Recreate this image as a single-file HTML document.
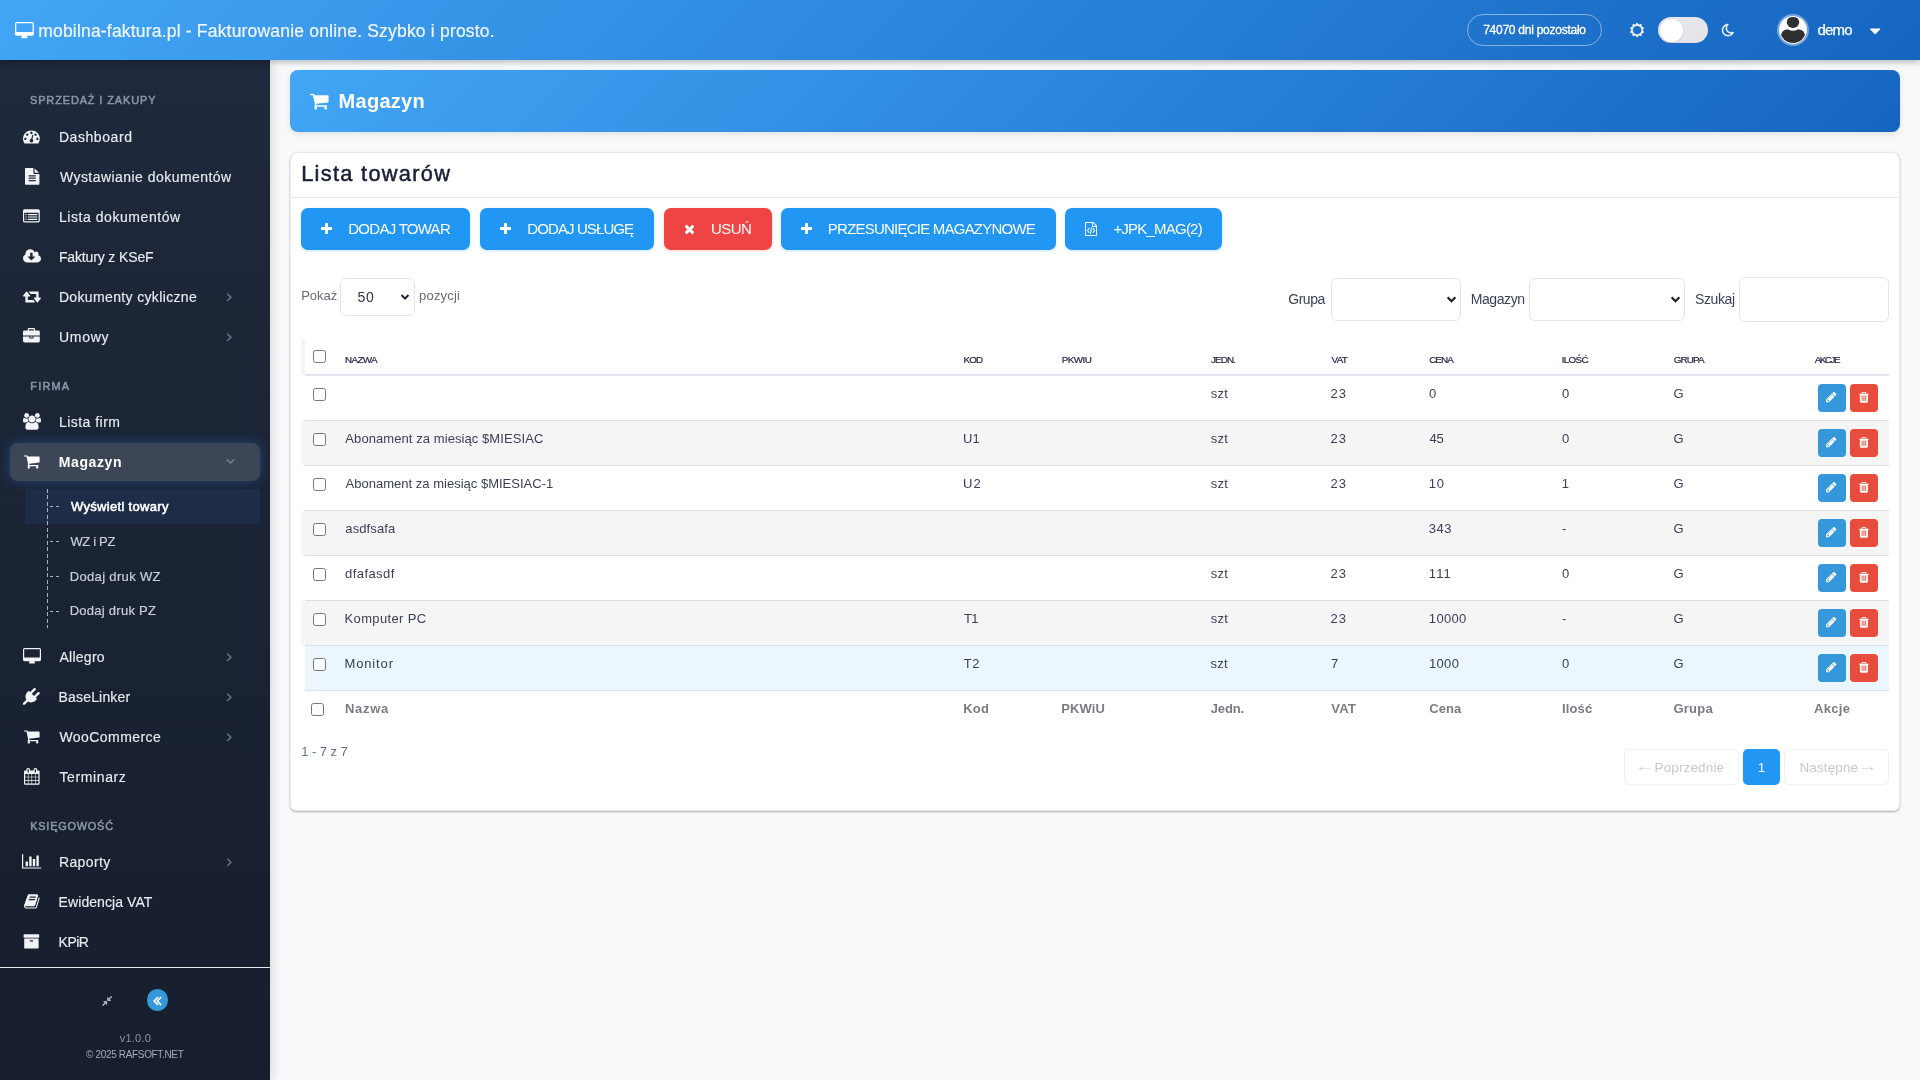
<!DOCTYPE html>
<html lang="pl"><head><meta charset="utf-8"><title>mobilna-faktura.pl - Magazyn</title>
<style>
*{box-sizing:border-box;margin:0;padding:0}
html,body{width:1920px;height:1080px;overflow:hidden}
body{background:#f8f9fb;font-family:"Liberation Sans",sans-serif;position:relative}
.t{position:absolute;white-space:nowrap;line-height:1;display:block}
.ic{position:absolute;display:block;overflow:visible}
.abs{position:absolute}
#topbar{position:absolute;left:0;top:0;width:1920px;height:60px;background:linear-gradient(135deg,#42a5f5 0%,#1565c0 100%);box-shadow:0 2px 6px rgba(0,0,0,.28);z-index:5}
#side{position:absolute;left:0;top:60px;width:270px;height:1020px;background:linear-gradient(180deg,#1e293b 0%,#171e2d 100%);box-shadow:3px 0 10px rgba(0,0,0,.12);z-index:4}
#banner{position:absolute;left:290px;top:70px;width:1610px;height:61.5px;border-radius:8px;background:linear-gradient(135deg,#42a5f5 0%,#1565c0 100%);box-shadow:0 2px 6px rgba(0,0,0,.10)}
#card{position:absolute;left:290px;top:152px;width:1610px;height:658.5px;border-radius:8px 8px 6px 6px;background:#fff;border:1px solid #e6e8ee;box-shadow:0 1px 2px rgba(0,0,0,.3)}
.btn{position:absolute;top:208px;height:42px;border-radius:7px;background:#2196f3;box-shadow:0 1px 3px rgba(33,150,243,.25)}
.btn.red{background:#ef4444;box-shadow:0 1px 3px rgba(239,68,68,.25)}
.sel{position:absolute;background:#fff;border:1px solid #e3e5ea;border-radius:6px}
.cb{position:absolute;width:13px;height:13px;border:1px solid #767676;border-radius:2.5px;background:#fff}
.row{position:absolute;left:301px;width:1588px;height:44px}
.hl{position:absolute;left:305px;width:1584px;height:1px;background:#dee0e4}
.ab{position:absolute;width:28px;height:28px;border-radius:4px}
</style></head><body><div id="wrap" style="position:absolute;left:0;top:0;width:1920px;height:1080px;will-change:transform">

<div id="topbar">
<svg class="ic" style="left:14.57px;top:21.70px;width:18.86px;height:17.60px;" viewBox="0 -1536 1920 1792"><path fill="#fff" transform="scale(1,-1)" d="M1792 544v832q0 13 -9.5 22.5t-22.5 9.5h-1600q-13 0 -22.5 -9.5t-9.5 -22.5v-832q0 -13 9.5 -22.5t22.5 -9.5h1600q13 0 22.5 9.5t9.5 22.5zM1920 1376v-1088q0 -66 -47 -113t-113 -47h-544q0 -37 16 -77.5t32 -71t16 -43.5q0 -26 -19 -45t-45 -19h-512q-26 0 -45 19 t-19 45q0 14 16 44t32 70t16 78h-544q-66 0 -113 47t-47 113v1088q0 66 47 113t113 47h1600q66 0 113 -47t47 -113z"/></svg>
<span class="t" id="brand" style="left:38.20px;top:22.79px;font-size:17.5px;font-weight:400;color:#f1f7fe;letter-spacing:0.192px;-webkit-text-stroke:0.2px #f1f7fe;">mobilna-faktura.pl - Fakturowanie online. Szybko i prosto.</span>
<div class="abs" style="left:1467px;top:14px;width:135px;height:32px;border-radius:16px;border:1px solid rgba(255,255,255,.45)"></div>
<span class="t" id="days" style="left:1483.15px;top:24.04px;font-size:12px;font-weight:400;color:#fff;letter-spacing:-0.252px;-webkit-text-stroke:0.3px #fff;">74070 dni pozostało</span>
<svg class="ic" style="left:1630.00px;top:23.10px;width:14.20px;height:14.20px;stroke:#fff;stroke-width:70" viewBox="0 -1536 1792 1792"><path fill="#fff" transform="scale(1,-1)" d="M1472 640q0 117 -45.5 223.5t-123 184t-184 123t-223.5 45.5t-223.5 -45.5t-184 -123t-123 -184t-45.5 -223.5t45.5 -223.5t123 -184t184 -123t223.5 -45.5t223.5 45.5t184 123t123 184t45.5 223.5zM1748 363q-4 -15 -20 -20l-292 -96v-306q0 -16 -13 -26q-15 -10 -29 -4 l-292 94l-180 -248q-10 -13 -26 -13t-26 13l-180 248l-292 -94q-14 -6 -29 4q-13 10 -13 26v306l-292 96q-16 5 -20 20q-5 17 4 29l180 248l-180 248q-9 13 -4 29q4 15 20 20l292 96v306q0 16 13 26q15 10 29 4l292 -94l180 248q9 12 26 12t26 -12l180 -248l292 94 q14 6 29 -4q13 -10 13 -26v-306l292 -96q16 -5 20 -20q5 -16 -4 -29l-180 -248l180 -248q9 -12 4 -29z"/></svg>
<div class="abs" style="left:1658px;top:17px;width:50px;height:26px;border-radius:13px;background:#e4e4e9"></div>
<div class="abs" style="left:1659.5px;top:18.5px;width:23px;height:23px;border-radius:50%;background:#fff;box-shadow:0 1px 2px rgba(0,0,0,.12)"></div>
<svg class="ic" style="left:1721.51px;top:23.10px;width:12.17px;height:14.20px;stroke:#fff;stroke-width:50" viewBox="0 -1536 1536 1792"><path fill="#fff" transform="scale(1,-1)" d="M1262 233q-54 -9 -110 -9q-182 0 -337 90t-245 245t-90 337q0 192 104 357q-201 -60 -328.5 -229t-127.5 -384q0 -130 51 -248.5t136.5 -204t204 -136.5t248.5 -51q144 0 273.5 61.5t220.5 171.5zM1465 318q-94 -203 -283.5 -324.5t-413.5 -121.5q-156 0 -298 61 t-245 164t-164 245t-61 298q0 153 57.5 292.5t156 241.5t235.5 164.5t290 68.5q44 2 61 -39q18 -41 -15 -72q-86 -78 -131.5 -181.5t-45.5 -218.5q0 -148 73 -273t198 -198t273 -73q118 0 228 51q41 18 72 -13q14 -14 17.5 -34t-4.5 -38z"/></svg>
<div class="abs" style="left:1777px;top:14px;width:32px;height:32px;border-radius:50%;border:2px solid rgba(255,255,255,.4);background-clip:padding-box"></div>
<div class="abs" style="left:1778.8px;top:15.8px;width:28.4px;height:28.4px;border-radius:50%;background:#fff"></div>
<div class="abs" style="left:1779.6px;top:16.6px;width:26.8px;height:26.8px;border-radius:50%;overflow:hidden"><svg style="position:absolute;left:-3.6px;top:-3.6px;width:34px;height:34px" viewBox="0 0 34 34"><g fill="#303030"><ellipse cx="17" cy="9.2" rx="6.2" ry="5.8"/><path d="M4.8 34 V24.5 Q4.8 16.6 11.8 16.2 Q17 19.4 22.2 16.2 Q29.2 16.6 29.2 24.5 V34 Z"/></g></svg></div>
<span class="t" id="demo" style="left:1817.47px;top:21.90px;font-size:15px;font-weight:400;color:#fff;letter-spacing:-0.794px;-webkit-text-stroke:0.25px #fff;">demo</span>
<svg class="ic" style="left:1870.06px;top:21.60px;width:10.29px;height:18.00px;" viewBox="0 -1536 1024 1792"><path fill="#fff" transform="scale(1,-1)" d="M1024 832q0 -26 -19 -45l-448 -448q-19 -19 -45 -19t-45 19l-448 448q-19 19 -19 45t19 45t45 19h896q26 0 45 -19t19 -45z"/></svg>
</div>
<div id="side">
<span class="t" id="h1" style="left:30.01px;top:35.37px;font-size:10.9px;font-weight:400;color:#8d96a8;letter-spacing:0.917px;-webkit-text-stroke:0.5px #8d96a8;">SPRZEDAŻ I ZAKUPY</span>
<svg class="ic" style="left:23.30px;top:68.00px;width:16.80px;height:16.80px;" viewBox="0 -1536 1792 1792"><path fill="#f1f3f6" transform="scale(1,-1)" d="M384 384q0 53 -37.5 90.5t-90.5 37.5t-90.5 -37.5t-37.5 -90.5t37.5 -90.5t90.5 -37.5t90.5 37.5t37.5 90.5zM576 832q0 53 -37.5 90.5t-90.5 37.5t-90.5 -37.5t-37.5 -90.5t37.5 -90.5t90.5 -37.5t90.5 37.5t37.5 90.5zM1004 351l101 382q6 26 -7.5 48.5t-38.5 29.5 t-48 -6.5t-30 -39.5l-101 -382q-60 -5 -107 -43.5t-63 -98.5q-20 -77 20 -146t117 -89t146 20t89 117q16 60 -6 117t-72 91zM1664 384q0 53 -37.5 90.5t-90.5 37.5t-90.5 -37.5t-37.5 -90.5t37.5 -90.5t90.5 -37.5t90.5 37.5t37.5 90.5zM1024 1024q0 53 -37.5 90.5 t-90.5 37.5t-90.5 -37.5t-37.5 -90.5t37.5 -90.5t90.5 -37.5t90.5 37.5t37.5 90.5zM1472 832q0 53 -37.5 90.5t-90.5 37.5t-90.5 -37.5t-37.5 -90.5t37.5 -90.5t90.5 -37.5t90.5 37.5t37.5 90.5zM1792 384q0 -261 -141 -483q-19 -29 -54 -29h-1402q-35 0 -54 29 q-141 221 -141 483q0 182 71 348t191 286t286 191t348 71t348 -71t286 -191t191 -286t71 -348z"/></svg>
<span class="t" id="m1" style="left:58.89px;top:69.85px;font-size:14px;font-weight:400;color:#e9ebef;letter-spacing:0.579px;-webkit-text-stroke:0.15px #e9ebef;">Dashboard</span>
<svg class="ic" style="left:24.50px;top:108.00px;width:14.40px;height:16.80px;" viewBox="0 -1536 1536 1792"><path fill="#f1f3f6" transform="scale(1,-1)" d="M1468 1060q14 -14 28 -36h-472v472q22 -14 36 -28zM992 896h544v-1056q0 -40 -28 -68t-68 -28h-1344q-40 0 -68 28t-28 68v1600q0 40 28 68t68 28h800v-544q0 -40 28 -68t68 -28zM1152 160v64q0 14 -9 23t-23 9h-704q-14 0 -23 -9t-9 -23v-64q0 -14 9 -23t23 -9h704 q14 0 23 9t9 23zM1152 416v64q0 14 -9 23t-23 9h-704q-14 0 -23 -9t-9 -23v-64q0 -14 9 -23t23 -9h704q14 0 23 9t9 23zM1152 672v64q0 14 -9 23t-23 9h-704q-14 0 -23 -9t-9 -23v-64q0 -14 9 -23t23 -9h704q14 0 23 9t9 23z"/></svg>
<span class="t" id="m2" style="left:59.88px;top:109.85px;font-size:14px;font-weight:400;color:#e9ebef;letter-spacing:0.456px;-webkit-text-stroke:0.15px #e9ebef;">Wystawianie dokumentów</span>
<svg class="ic" style="left:23.30px;top:148.00px;width:16.80px;height:16.80px;" viewBox="0 -1536 1792 1792"><path fill="#f1f3f6" transform="scale(1,-1)" d="M384 352v-64q0 -13 -9.5 -22.5t-22.5 -9.5h-64q-13 0 -22.5 9.5t-9.5 22.5v64q0 13 9.5 22.5t22.5 9.5h64q13 0 22.5 -9.5t9.5 -22.5zM384 608v-64q0 -13 -9.5 -22.5t-22.5 -9.5h-64q-13 0 -22.5 9.5t-9.5 22.5v64q0 13 9.5 22.5t22.5 9.5h64q13 0 22.5 -9.5t9.5 -22.5z M384 864v-64q0 -13 -9.5 -22.5t-22.5 -9.5h-64q-13 0 -22.5 9.5t-9.5 22.5v64q0 13 9.5 22.5t22.5 9.5h64q13 0 22.5 -9.5t9.5 -22.5zM1536 352v-64q0 -13 -9.5 -22.5t-22.5 -9.5h-960q-13 0 -22.5 9.5t-9.5 22.5v64q0 13 9.5 22.5t22.5 9.5h960q13 0 22.5 -9.5t9.5 -22.5z M1536 608v-64q0 -13 -9.5 -22.5t-22.5 -9.5h-960q-13 0 -22.5 9.5t-9.5 22.5v64q0 13 9.5 22.5t22.5 9.5h960q13 0 22.5 -9.5t9.5 -22.5zM1536 864v-64q0 -13 -9.5 -22.5t-22.5 -9.5h-960q-13 0 -22.5 9.5t-9.5 22.5v64q0 13 9.5 22.5t22.5 9.5h960q13 0 22.5 -9.5 t9.5 -22.5zM1664 160v832q0 13 -9.5 22.5t-22.5 9.5h-1472q-13 0 -22.5 -9.5t-9.5 -22.5v-832q0 -13 9.5 -22.5t22.5 -9.5h1472q13 0 22.5 9.5t9.5 22.5zM1792 1248v-1088q0 -66 -47 -113t-113 -47h-1472q-66 0 -113 47t-47 113v1088q0 66 47 113t113 47h1472q66 0 113 -47 t47 -113z"/></svg>
<span class="t" id="m3" style="left:58.89px;top:149.85px;font-size:14px;font-weight:400;color:#e9ebef;letter-spacing:0.565px;-webkit-text-stroke:0.15px #e9ebef;">Lista dokumentów</span>
<svg class="ic" style="left:22.70px;top:188.00px;width:18.00px;height:16.80px;" viewBox="0 -1536 1920 1792"><path fill="#f1f3f6" transform="scale(1,-1)" d="M1280 608q0 14 -9 23t-23 9h-224v352q0 13 -9.5 22.5t-22.5 9.5h-192q-13 0 -22.5 -9.5t-9.5 -22.5v-352h-224q-13 0 -22.5 -9.5t-9.5 -22.5q0 -14 9 -23l352 -352q9 -9 23 -9t23 9l351 351q10 12 10 24zM1920 384q0 -159 -112.5 -271.5t-271.5 -112.5h-1088 q-185 0 -316.5 131.5t-131.5 316.5q0 130 70 240t188 165q-2 30 -2 43q0 212 150 362t362 150q156 0 285.5 -87t188.5 -231q71 62 166 62q106 0 181 -75t75 -181q0 -76 -41 -138q130 -31 213.5 -135.5t83.5 -238.5z"/></svg>
<span class="t" id="m4" style="left:58.89px;top:189.85px;font-size:14px;font-weight:400;color:#e9ebef;letter-spacing:-0.134px;-webkit-text-stroke:0.15px #e9ebef;">Faktury z KSeF</span>
<svg class="ic" style="left:22.70px;top:228.00px;width:18.00px;height:16.80px;" viewBox="0 -1536 1920 1792"><path fill="#f1f3f6" transform="scale(1,-1)" d="M1280 32q0 -13 -9.5 -22.5t-22.5 -9.5h-960q-8 0 -13.5 2t-9 7t-5.5 8t-3 11.5t-1 11.5v13v11v160v416h-192q-26 0 -45 19t-19 45q0 24 15 41l320 384q19 22 49 22t49 -22l320 -384q15 -17 15 -41q0 -26 -19 -45t-45 -19h-192v-384h576q16 0 25 -11l160 -192q7 -10 7 -21 zM1920 448q0 -24 -15 -41l-320 -384q-20 -23 -49 -23t-49 23l-320 384q-15 17 -15 41q0 26 19 45t45 19h192v384h-576q-16 0 -25 12l-160 192q-7 9 -7 20q0 13 9.5 22.5t22.5 9.5h960q8 0 13.5 -2t9 -7t5.5 -8t3 -11.5t1 -11.5v-13v-11v-160v-416h192q26 0 45 -19t19 -45z"/></svg>
<span class="t" id="m5" style="left:58.90px;top:229.85px;font-size:14px;font-weight:400;color:#e9ebef;letter-spacing:0.356px;-webkit-text-stroke:0.15px #e9ebef;">Dokumenty cykliczne</span>
<svg class="ic" style="left:227.47px;top:229.50px;width:4.86px;height:13.60px;stroke:#727d91;stroke-width:50" viewBox="0 -1536 640 1792"><path fill="#727d91" transform="scale(1,-1)" d="M595 576q0 -13 -10 -23l-466 -466q-10 -10 -23 -10t-23 10l-50 50q-10 10 -10 23t10 23l393 393l-393 393q-10 10 -10 23t10 23l50 50q10 10 23 10t23 -10l466 -466q10 -10 10 -23z"/></svg>
<svg class="ic" style="left:23.30px;top:268.00px;width:16.80px;height:16.80px;" viewBox="0 -1536 1792 1792"><path fill="#f1f3f6" transform="scale(1,-1)" d="M640 1280h512v128h-512v-128zM1792 640v-480q0 -66 -47 -113t-113 -47h-1472q-66 0 -113 47t-47 113v480h672v-160q0 -26 19 -45t45 -19h320q26 0 45 19t19 45v160h672zM1024 640v-128h-256v128h256zM1792 1120v-384h-1792v384q0 66 47 113t113 47h352v160q0 40 28 68 t68 28h576q40 0 68 -28t28 -68v-160h352q66 0 113 -47t47 -113z"/></svg>
<span class="t" id="m6" style="left:58.99px;top:269.85px;font-size:14px;font-weight:400;color:#e9ebef;letter-spacing:0.722px;-webkit-text-stroke:0.15px #e9ebef;">Umowy</span>
<svg class="ic" style="left:227.47px;top:269.50px;width:4.86px;height:13.60px;stroke:#727d91;stroke-width:50" viewBox="0 -1536 640 1792"><path fill="#727d91" transform="scale(1,-1)" d="M595 576q0 -13 -10 -23l-466 -466q-10 -10 -23 -10t-23 10l-50 50q-10 10 -10 23t10 23l393 393l-393 393q-10 10 -10 23t10 23l50 50q10 10 23 10t23 -10l466 -466q10 -10 10 -23z"/></svg>
<span class="t" id="h2" style="left:30.29px;top:321.17px;font-size:10.9px;font-weight:400;color:#8d96a8;letter-spacing:1.215px;-webkit-text-stroke:0.5px #8d96a8;">FIRMA</span>
<svg class="ic" style="left:22.70px;top:353.00px;width:18.00px;height:16.80px;" viewBox="0 -1536 1920 1792"><path fill="#f1f3f6" transform="scale(1,-1)" d="M593 640q-162 -5 -265 -128h-134q-82 0 -138 40.5t-56 118.5q0 353 124 353q6 0 43.5 -21t97.5 -42.5t119 -21.5q67 0 133 23q-5 -37 -5 -66q0 -139 81 -256zM1664 3q0 -120 -73 -189.5t-194 -69.5h-874q-121 0 -194 69.5t-73 189.5q0 53 3.5 103.5t14 109t26.5 108.5 t43 97.5t62 81t85.5 53.5t111.5 20q10 0 43 -21.5t73 -48t107 -48t135 -21.5t135 21.5t107 48t73 48t43 21.5q61 0 111.5 -20t85.5 -53.5t62 -81t43 -97.5t26.5 -108.5t14 -109t3.5 -103.5zM640 1280q0 -106 -75 -181t-181 -75t-181 75t-75 181t75 181t181 75t181 -75 t75 -181zM1344 896q0 -159 -112.5 -271.5t-271.5 -112.5t-271.5 112.5t-112.5 271.5t112.5 271.5t271.5 112.5t271.5 -112.5t112.5 -271.5zM1920 671q0 -78 -56 -118.5t-138 -40.5h-134q-103 123 -265 128q81 117 81 256q0 29 -5 66q66 -23 133 -23q59 0 119 21.5t97.5 42.5 t43.5 21q124 0 124 -353zM1792 1280q0 -106 -75 -181t-181 -75t-181 75t-75 181t75 181t181 75t181 -75t75 -181z"/></svg>
<span class="t" id="m7" style="left:58.91px;top:354.85px;font-size:14px;font-weight:400;color:#e9ebef;letter-spacing:0.476px;-webkit-text-stroke:0.15px #e9ebef;">Lista firm</span>
<div class="abs" style="left:10px;top:383.2px;width:250px;height:37.6px;border-radius:8px;background:#3d4656;box-shadow:0 0 12px rgba(45,90,175,.6)"></div>
<svg class="ic" style="left:23.90px;top:393.00px;width:15.60px;height:16.80px;" viewBox="0 -1536 1664 1792"><path fill="#fff" transform="scale(1,-1)" d="M640 0q0 -52 -38 -90t-90 -38t-90 38t-38 90t38 90t90 38t90 -38t38 -90zM1536 0q0 -52 -38 -90t-90 -38t-90 38t-38 90t38 90t90 38t90 -38t38 -90zM1664 1088v-512q0 -24 -16.5 -42.5t-40.5 -21.5l-1044 -122q13 -60 13 -70q0 -16 -24 -64h920q26 0 45 -19t19 -45 t-19 -45t-45 -19h-1024q-26 0 -45 19t-19 45q0 11 8 31.5t16 36t21.5 40t15.5 29.5l-177 823h-204q-26 0 -45 19t-19 45t19 45t45 19h256q16 0 28.5 -6.5t19.5 -15.5t13 -24.5t8 -26t5.5 -29.5t4.5 -26h1201q26 0 45 -19t19 -45z"/></svg>
<span class="t" id="m8" style="left:58.82px;top:395.45px;font-size:14px;font-weight:700;color:#fff;letter-spacing:0.603px;">Magazyn</span>
<svg class="ic" style="left:225.50px;top:394.30px;width:9.00px;height:14.00px;stroke:#838c9c;stroke-width:40" viewBox="0 -1536 1152 1792"><path fill="#838c9c" transform="scale(1,-1)" d="M1075 800q0 -13 -10 -23l-466 -466q-10 -10 -23 -10t-23 10l-466 466q-10 10 -10 23t10 23l50 50q10 10 23 10t23 -10l393 -393l393 393q10 10 23 10t23 -10l50 -50q10 -10 10 -23z"/></svg>
<div class="abs" style="left:25px;top:429px;width:235px;height:34.5px;background:#1e2c48"></div>
<div class="abs" style="left:46.7px;top:429px;width:1px;height:139px;background:repeating-linear-gradient(180deg,#aab1c0 0,#aab1c0 4px,transparent 4px,transparent 6.5px)"></div>
<div class="abs" style="left:49.7px;top:446.4px;width:3.2px;height:1px;background:#aab1c0"></div><div class="abs" style="left:55.8px;top:446.4px;width:3.2px;height:1px;background:#aab1c0"></div>
<span class="t" id="s0" style="left:70.93px;top:439.80px;font-size:13px;font-weight:400;color:#fff;letter-spacing:0.317px;-webkit-text-stroke:0.55px #fff;">Wyświetl towary</span>
<div class="abs" style="left:49.7px;top:481.4px;width:3.2px;height:1px;background:#aab1c0"></div><div class="abs" style="left:55.8px;top:481.4px;width:3.2px;height:1px;background:#aab1c0"></div>
<span class="t" id="s1" style="left:70.43px;top:474.80px;font-size:13px;font-weight:400;color:#c9ced8;letter-spacing:-0.325px;-webkit-text-stroke:0.2px #c9ced8;">WZ i PZ</span>
<div class="abs" style="left:49.7px;top:516.4px;width:3.2px;height:1px;background:#aab1c0"></div><div class="abs" style="left:55.8px;top:516.4px;width:3.2px;height:1px;background:#aab1c0"></div>
<span class="t" id="s2" style="left:69.71px;top:509.80px;font-size:13px;font-weight:400;color:#c9ced8;letter-spacing:0.347px;-webkit-text-stroke:0.2px #c9ced8;">Dodaj druk WZ</span>
<div class="abs" style="left:49.7px;top:550.9px;width:3.2px;height:1px;background:#aab1c0"></div><div class="abs" style="left:55.8px;top:550.9px;width:3.2px;height:1px;background:#aab1c0"></div>
<span class="t" id="s3" style="left:69.68px;top:544.30px;font-size:13px;font-weight:400;color:#c9ced8;letter-spacing:0.265px;-webkit-text-stroke:0.2px #c9ced8;">Dodaj druk PZ</span>
<svg class="ic" style="left:22.70px;top:588.00px;width:18.00px;height:16.80px;" viewBox="0 -1536 1920 1792"><path fill="#f1f3f6" transform="scale(1,-1)" d="M1792 544v832q0 13 -9.5 22.5t-22.5 9.5h-1600q-13 0 -22.5 -9.5t-9.5 -22.5v-832q0 -13 9.5 -22.5t22.5 -9.5h1600q13 0 22.5 9.5t9.5 22.5zM1920 1376v-1088q0 -66 -47 -113t-113 -47h-544q0 -37 16 -77.5t32 -71t16 -43.5q0 -26 -19 -45t-45 -19h-512q-26 0 -45 19 t-19 45q0 14 16 44t32 70t16 78h-544q-66 0 -113 47t-47 113v1088q0 66 47 113t113 47h1600q66 0 113 -47t47 -113z"/></svg>
<span class="t" id="m9" style="left:59.41px;top:589.85px;font-size:14px;font-weight:400;color:#e9ebef;letter-spacing:0.273px;-webkit-text-stroke:0.15px #e9ebef;">Allegro</span>
<svg class="ic" style="left:227.47px;top:589.50px;width:4.86px;height:13.60px;stroke:#727d91;stroke-width:50" viewBox="0 -1536 640 1792"><path fill="#727d91" transform="scale(1,-1)" d="M595 576q0 -13 -10 -23l-466 -466q-10 -10 -23 -10t-23 10l-50 50q-10 10 -10 23t10 23l393 393l-393 393q-10 10 -10 23t10 23l50 50q10 10 23 10t23 -10l466 -466q10 -10 10 -23z"/></svg>
<svg class="ic" style="left:23.30px;top:628.00px;width:16.80px;height:16.80px;" viewBox="0 -1536 1792 1792"><path fill="#f1f3f6" transform="scale(1,-1)" d="M1755 1083q37 -38 37 -90.5t-37 -90.5l-401 -400l150 -150l-160 -160q-163 -163 -389.5 -186.5t-411.5 100.5l-362 -362h-181v181l362 362q-124 185 -100.5 411.5t186.5 389.5l160 160l150 -150l400 401q38 37 91 37t90 -37t37 -90.5t-37 -90.5l-400 -401l234 -234 l401 400q38 37 91 37t90 -37z"/></svg>
<span class="t" id="m10" style="left:58.47px;top:629.85px;font-size:14px;font-weight:400;color:#e9ebef;letter-spacing:0.187px;-webkit-text-stroke:0.15px #e9ebef;">BaseLinker</span>
<svg class="ic" style="left:227.47px;top:629.50px;width:4.86px;height:13.60px;stroke:#727d91;stroke-width:50" viewBox="0 -1536 640 1792"><path fill="#727d91" transform="scale(1,-1)" d="M595 576q0 -13 -10 -23l-466 -466q-10 -10 -23 -10t-23 10l-50 50q-10 10 -10 23t10 23l393 393l-393 393q-10 10 -10 23t10 23l50 50q10 10 23 10t23 -10l466 -466q10 -10 10 -23z"/></svg>
<svg class="ic" style="left:23.90px;top:668.00px;width:15.60px;height:16.80px;" viewBox="0 -1536 1664 1792"><path fill="#f1f3f6" transform="scale(1,-1)" d="M640 0q0 -52 -38 -90t-90 -38t-90 38t-38 90t38 90t90 38t90 -38t38 -90zM1536 0q0 -52 -38 -90t-90 -38t-90 38t-38 90t38 90t90 38t90 -38t38 -90zM1664 1088v-512q0 -24 -16.5 -42.5t-40.5 -21.5l-1044 -122q13 -60 13 -70q0 -16 -24 -64h920q26 0 45 -19t19 -45 t-19 -45t-45 -19h-1024q-26 0 -45 19t-19 45q0 11 8 31.5t16 36t21.5 40t15.5 29.5l-177 823h-204q-26 0 -45 19t-19 45t19 45t45 19h256q16 0 28.5 -6.5t19.5 -15.5t13 -24.5t8 -26t5.5 -29.5t4.5 -26h1201q26 0 45 -19t19 -45z"/></svg>
<span class="t" id="m11" style="left:59.49px;top:669.85px;font-size:14px;font-weight:400;color:#e9ebef;letter-spacing:0.427px;-webkit-text-stroke:0.15px #e9ebef;">WooCommerce</span>
<svg class="ic" style="left:227.47px;top:669.50px;width:4.86px;height:13.60px;stroke:#727d91;stroke-width:50" viewBox="0 -1536 640 1792"><path fill="#727d91" transform="scale(1,-1)" d="M595 576q0 -13 -10 -23l-466 -466q-10 -10 -23 -10t-23 10l-50 50q-10 10 -10 23t10 23l393 393l-393 393q-10 10 -10 23t10 23l50 50q10 10 23 10t23 -10l466 -466q10 -10 10 -23z"/></svg>
<svg class="ic" style="left:23.90px;top:708.00px;width:15.60px;height:16.80px;" viewBox="0 -1536 1664 1792"><path fill="#f1f3f6" transform="scale(1,-1)" d="M128 -128h288v288h-288v-288zM480 -128h320v288h-320v-288zM128 224h288v320h-288v-320zM480 224h320v320h-320v-320zM128 608h288v288h-288v-288zM864 -128h320v288h-320v-288zM480 608h320v288h-320v-288zM1248 -128h288v288h-288v-288zM864 224h320v320h-320v-320z M512 1088v288q0 13 -9.5 22.5t-22.5 9.5h-64q-13 0 -22.5 -9.5t-9.5 -22.5v-288q0 -13 9.5 -22.5t22.5 -9.5h64q13 0 22.5 9.5t9.5 22.5zM1248 224h288v320h-288v-320zM864 608h320v288h-320v-288zM1248 608h288v288h-288v-288zM1280 1088v288q0 13 -9.5 22.5t-22.5 9.5h-64 q-13 0 -22.5 -9.5t-9.5 -22.5v-288q0 -13 9.5 -22.5t22.5 -9.5h64q13 0 22.5 9.5t9.5 22.5zM1664 1152v-1280q0 -52 -38 -90t-90 -38h-1408q-52 0 -90 38t-38 90v1280q0 52 38 90t90 38h128v96q0 66 47 113t113 47h64q66 0 113 -47t47 -113v-96h384v96q0 66 47 113t113 47 h64q66 0 113 -47t47 -113v-96h128q52 0 90 -38t38 -90z"/></svg>
<span class="t" id="m12" style="left:59.46px;top:709.85px;font-size:14px;font-weight:400;color:#e9ebef;letter-spacing:0.611px;-webkit-text-stroke:0.15px #e9ebef;">Terminarz</span>
<span class="t" id="h3" style="left:30.27px;top:761.17px;font-size:10.9px;font-weight:400;color:#8d96a8;letter-spacing:0.789px;-webkit-text-stroke:0.5px #8d96a8;">KSIĘGOWOŚĆ</span>
<svg class="ic" style="left:22.10px;top:793.00px;width:19.20px;height:16.80px;" viewBox="0 -1536 2048 1792"><path fill="#f1f3f6" transform="scale(1,-1)" d="M640 640v-512h-256v512h256zM1024 1152v-1024h-256v1024h256zM2048 0v-128h-2048v1536h128v-1408h1920zM1408 896v-768h-256v768h256zM1792 1280v-1152h-256v1152h256z"/></svg>
<span class="t" id="m13" style="left:58.89px;top:794.85px;font-size:14px;font-weight:400;color:#e9ebef;letter-spacing:0.403px;-webkit-text-stroke:0.15px #e9ebef;">Raporty</span>
<svg class="ic" style="left:227.47px;top:794.50px;width:4.86px;height:13.60px;stroke:#727d91;stroke-width:50" viewBox="0 -1536 640 1792"><path fill="#727d91" transform="scale(1,-1)" d="M595 576q0 -13 -10 -23l-466 -466q-10 -10 -23 -10t-23 10l-50 50q-10 10 -10 23t10 23l393 393l-393 393q-10 10 -10 23t10 23l50 50q10 10 23 10t23 -10l466 -466q10 -10 10 -23z"/></svg>
<svg class="ic" style="left:23.90px;top:833.00px;width:15.60px;height:16.80px;" viewBox="0 -1536 1664 1792"><path fill="#f1f3f6" transform="scale(1,-1)" d="M1639 1058q40 -57 18 -129l-275 -906q-19 -64 -76.5 -107.5t-122.5 -43.5h-923q-77 0 -148.5 53.5t-99.5 131.5q-24 67 -2 127q0 4 3 27t4 37q1 8 -3 21.5t-3 19.5q2 11 8 21t16.5 23.5t16.5 23.5q23 38 45 91.5t30 91.5q3 10 0.5 30t-0.5 28q3 11 17 28t17 23 q21 36 42 92t25 90q1 9 -2.5 32t0.5 28q4 13 22 30.5t22 22.5q19 26 42.5 84.5t27.5 96.5q1 8 -3 25.5t-2 26.5q2 8 9 18t18 23t17 21q8 12 16.5 30.5t15 35t16 36t19.5 32t26.5 23.5t36 11.5t47.5 -5.5l-1 -3q38 9 51 9h761q74 0 114 -56t18 -130l-274 -906 q-36 -119 -71.5 -153.5t-128.5 -34.5h-869q-27 0 -38 -15q-11 -16 -1 -43q24 -70 144 -70h923q29 0 56 15.5t35 41.5l300 987q7 22 5 57q38 -15 59 -43zM575 1056q-4 -13 2 -22.5t20 -9.5h608q13 0 25.5 9.5t16.5 22.5l21 64q4 13 -2 22.5t-20 9.5h-608q-13 0 -25.5 -9.5 t-16.5 -22.5zM492 800q-4 -13 2 -22.5t20 -9.5h608q13 0 25.5 9.5t16.5 22.5l21 64q4 13 -2 22.5t-20 9.5h-608q-13 0 -25.5 -9.5t-16.5 -22.5z"/></svg>
<span class="t" id="m14" style="left:58.60px;top:834.85px;font-size:14px;font-weight:400;color:#e9ebef;letter-spacing:0.075px;-webkit-text-stroke:0.15px #e9ebef;">Ewidencja VAT</span>
<svg class="ic" style="left:23.30px;top:873.00px;width:16.80px;height:16.80px;" viewBox="0 -1536 1792 1792"><path fill="#f1f3f6" transform="scale(1,-1)" d="M1088 704q0 26 -19 45t-45 19h-256q-26 0 -45 -19t-19 -45t19 -45t45 -19h256q26 0 45 19t19 45zM1664 896v-960q0 -26 -19 -45t-45 -19h-1408q-26 0 -45 19t-19 45v960q0 26 19 45t45 19h1408q26 0 45 -19t19 -45zM1728 1344v-256q0 -26 -19 -45t-45 -19h-1536 q-26 0 -45 19t-19 45v256q0 26 19 45t45 19h1536q26 0 45 -19t19 -45z"/></svg>
<span class="t" id="m15" style="left:58.61px;top:874.85px;font-size:14px;font-weight:400;color:#e9ebef;letter-spacing:-0.519px;-webkit-text-stroke:0.15px #e9ebef;">KPiR</span>
<div class="abs" style="left:0;top:907px;width:270px;height:1px;background:#e8eaee"></div>
<svg class="ic" style="left:102.06px;top:934.50px;width:10.29px;height:12.00px;" viewBox="0 -1536 1536 1792"><path fill="#aab1be" transform="scale(1,-1)" d="M768 576v-448q0 -26 -19 -45t-45 -19t-45 19l-144 144l-332 -332q-10 -10 -23 -10t-23 10l-114 114q-10 10 -10 23t10 23l332 332l-144 144q-19 19 -19 45t19 45t45 19h448q26 0 45 -19t19 -45zM1523 1248q0 -13 -10 -23l-332 -332l144 -144q19 -19 19 -45t-19 -45 t-45 -19h-448q-26 0 -45 19t-19 45v448q0 26 19 45t45 19t45 -19l144 -144l332 332q10 10 23 10t23 -10l114 -114q10 -10 10 -23z"/></svg>
<div class="abs" style="left:146.7px;top:929.3px;width:21.4px;height:21.4px;border-radius:50%;background:#3498db"></div>
<svg class="ic" style="left:152.71px;top:932.50px;width:8.57px;height:15.00px;stroke:#fff;stroke-width:70" viewBox="0 -1536 1024 1792"><path fill="#fff" transform="scale(1,-1)" d="M627 160q0 -13 -10 -23l-50 -50q-10 -10 -23 -10t-23 10l-466 466q-10 10 -10 23t10 23l466 466q10 10 23 10t23 -10l50 -50q10 -10 10 -23t-10 -23l-393 -393l393 -393q10 -10 10 -23zM1011 160q0 -13 -10 -23l-50 -50q-10 -10 -23 -10t-23 10l-466 466q-10 10 -10 23 t10 23l466 466q10 10 23 10t23 -10l50 -50q10 -10 10 -23t-10 -23l-393 -393l393 -393q10 -10 10 -23z"/></svg>
<span class="t" id="ver" style="left:119.81px;top:972.99px;font-size:11px;font-weight:400;color:#8d96a8;letter-spacing:0.204px;">v1.0.0</span>
<span class="t" id="copy" style="left:85.98px;top:989.83px;font-size:10px;font-weight:400;color:#a4abba;letter-spacing:-0.334px;">© 2025 RAFSOFT.NET</span>
</div>
<div id="banner"></div>
<svg class="ic" style="left:310.21px;top:90.50px;width:18.57px;height:20.00px;" viewBox="0 -1536 1664 1792"><path fill="#fff" transform="scale(1,-1)" d="M640 0q0 -52 -38 -90t-90 -38t-90 38t-38 90t38 90t90 38t90 -38t38 -90zM1536 0q0 -52 -38 -90t-90 -38t-90 38t-38 90t38 90t90 38t90 -38t38 -90zM1664 1088v-512q0 -24 -16.5 -42.5t-40.5 -21.5l-1044 -122q13 -60 13 -70q0 -16 -24 -64h920q26 0 45 -19t19 -45 t-19 -45t-45 -19h-1024q-26 0 -45 19t-19 45q0 11 8 31.5t16 36t21.5 40t15.5 29.5l-177 823h-204q-26 0 -45 19t-19 45t19 45t45 19h256q16 0 28.5 -6.5t19.5 -15.5t13 -24.5t8 -26t5.5 -29.5t4.5 -26h1201q26 0 45 -19t19 -45z"/></svg>
<span class="t" id="bt" style="left:338.53px;top:91.27px;font-size:20px;font-weight:700;color:#fff;letter-spacing:0.291px;">Magazyn</span>
<div id="card"></div>
<span class="t" id="title" style="left:301.20px;top:163.05px;font-size:21.8px;font-weight:400;color:#1a1f36;letter-spacing:1.296px;-webkit-text-stroke:0.5px #1a1f36;">Lista towarów</span>
<div class="abs" style="left:291px;top:197px;width:1608px;height:1px;background:#e6e8ee"></div>
<div class="btn" style="left:301px;width:169px"></div>
<svg class="ic" style="left:320.70px;top:222.00px;width:11.00px;height:14.00px;" viewBox="0 -1536 1408 1792"><path fill="#fff" transform="scale(1,-1)" d="M1408 800v-192q0 -40 -28 -68t-68 -28h-416v-416q0 -40 -28 -68t-68 -28h-192q-40 0 -68 28t-28 68v416h-416q-40 0 -68 28t-28 68v192q0 40 28 68t68 28h416v416q0 40 28 68t68 28h192q40 0 68 -28t28 -68v-416h416q40 0 68 -28t28 -68z"/></svg>
<span class="t" id="b1" style="left:348.22px;top:220.80px;font-size:15px;font-weight:400;color:#fff;letter-spacing:-0.721px;">DODAJ TOWAR</span>
<div class="btn" style="left:480px;width:173.70000000000005px"></div>
<svg class="ic" style="left:499.80px;top:222.00px;width:11.00px;height:14.00px;" viewBox="0 -1536 1408 1792"><path fill="#fff" transform="scale(1,-1)" d="M1408 800v-192q0 -40 -28 -68t-68 -28h-416v-416q0 -40 -28 -68t-68 -28h-192q-40 0 -68 28t-28 68v416h-416q-40 0 -68 28t-28 68v192q0 40 28 68t68 28h416v416q0 40 28 68t68 28h192q40 0 68 -28t28 -68v-416h416q40 0 68 -28t28 -68z"/></svg>
<span class="t" id="b2" style="left:527.22px;top:220.80px;font-size:15px;font-weight:400;color:#fff;letter-spacing:-0.891px;">DODAJ USŁUGĘ</span>
<div class="btn red" style="left:664px;width:108px"></div>
<svg class="ic" style="left:683.70px;top:222.00px;width:11.00px;height:14.00px;" viewBox="0 -1536 1408 1792"><path fill="#fff" transform="scale(1,-1)" d="M1298 214q0 -40 -28 -68l-136 -136q-28 -28 -68 -28t-68 28l-294 294l-294 -294q-28 -28 -68 -28t-68 28l-136 136q-28 28 -28 68t28 68l294 294l-294 294q-28 28 -28 68t28 68l136 136q28 28 68 28t68 -28l294 -294l294 294q28 28 68 28t68 -28l136 -136q28 -28 28 -68 t-28 -68l-294 -294l294 -294q28 -28 28 -68z"/></svg>
<span class="t" id="b3" style="left:711.08px;top:220.80px;font-size:15px;font-weight:400;color:#fff;letter-spacing:-0.582px;">USUŃ</span>
<div class="btn" style="left:781px;width:274.70000000000005px"></div>
<svg class="ic" style="left:800.80px;top:222.00px;width:11.00px;height:14.00px;" viewBox="0 -1536 1408 1792"><path fill="#fff" transform="scale(1,-1)" d="M1408 800v-192q0 -40 -28 -68t-68 -28h-416v-416q0 -40 -28 -68t-68 -28h-192q-40 0 -68 28t-28 68v416h-416q-40 0 -68 28t-28 68v192q0 40 28 68t68 28h416v416q0 40 28 68t68 28h192q40 0 68 -28t28 -68v-416h416q40 0 68 -28t28 -68z"/></svg>
<span class="t" id="b4" style="left:827.87px;top:220.80px;font-size:15px;font-weight:400;color:#fff;letter-spacing:-0.776px;">PRZESUNIĘCIE MAGAZYNOWE</span>
<div class="btn" style="left:1065px;width:156.70000000000005px"></div>
<svg class="ic" style="left:1085.00px;top:222.00px;width:12.00px;height:14.00px;" viewBox="0 -1536 1536 1792"><path fill="#fff" transform="scale(1,-1)" d="M1468 1156q28 -28 48 -76t20 -88v-1152q0 -40 -28 -68t-68 -28h-1344q-40 0 -68 28t-28 68v1600q0 40 28 68t68 28h896q40 0 88 -20t76 -48zM1024 1400v-376h376q-10 29 -22 41l-313 313q-12 12 -41 22zM1408 -128v1024h-416q-40 0 -68 28t-28 68v416h-768v-1536h1280z M480 768q8 11 21 12.5t24 -6.5l51 -38q11 -8 12.5 -21t-6.5 -24l-182 -243l182 -243q8 -11 6.5 -24t-12.5 -21l-51 -38q-11 -8 -24 -6.5t-21 12.5l-226 301q-14 19 0 38zM1282 467q14 -19 0 -38l-226 -301q-8 -11 -21 -12.5t-24 6.5l-51 38q-11 8 -12.5 21t6.5 24l182 243 l-182 243q-8 11 -6.5 24t12.5 21l51 38q11 8 24 6.5t21 -12.5zM662 6q-13 2 -20.5 13t-5.5 24l138 831q2 13 13 20.5t24 5.5l63 -10q13 -2 20.5 -13t5.5 -24l-138 -831q-2 -13 -13 -20.5t-24 -5.5z"/></svg>
<span class="t" id="b5" style="left:1113.38px;top:220.80px;font-size:15px;font-weight:400;color:#fff;letter-spacing:-0.783px;">+JPK_MAG(2)</span>
<span class="t" id="pokaz" style="left:301.15px;top:289.00px;font-size:13px;font-weight:400;color:#666b78;letter-spacing:-0.008px;">Pokaż</span>
<div class="sel" style="left:340px;top:278px;width:75px;height:37.5px"></div>
<span class="t" id="n50" style="left:357.48px;top:290.15px;font-size:14px;font-weight:400;color:#2c3246;letter-spacing:0.672px;">50</span>
<svg class="ic" style="left:400px;top:293px;width:10px;height:8px" viewBox="0 0 10 8"><path d="M1.5 2 L5 5.6 L8.5 2" fill="none" stroke="#1d2233" stroke-width="2"/></svg>
<span class="t" id="pozycji" style="left:419.07px;top:289.00px;font-size:13px;font-weight:400;color:#666b78;letter-spacing:0.195px;">pozycji</span>
<span class="t" id="grupa" style="left:1288.29px;top:292.45px;font-size:14px;font-weight:400;color:#3b4157;letter-spacing:-0.497px;">Grupa</span>
<div class="sel" style="left:1331px;top:278px;width:130px;height:43px"></div>
<svg class="ic" style="left:1446.4px;top:294.9px;width:11px;height:8.8px" viewBox="0 0 10 8"><path d="M1.5 2 L5 5.6 L8.5 2" fill="none" stroke="#1d2233" stroke-width="2"/></svg>
<span class="t" id="magf" style="left:1470.74px;top:292.45px;font-size:14px;font-weight:400;color:#3b4157;letter-spacing:-0.418px;">Magazyn</span>
<div class="sel" style="left:1529px;top:278px;width:156px;height:43px"></div>
<svg class="ic" style="left:1670.2px;top:294.9px;width:11px;height:8.8px" viewBox="0 0 10 8"><path d="M1.5 2 L5 5.6 L8.5 2" fill="none" stroke="#1d2233" stroke-width="2"/></svg>
<span class="t" id="szukaj" style="left:1694.95px;top:292.45px;font-size:14px;font-weight:400;color:#3b4157;letter-spacing:-0.388px;">Szukaj</span>
<div class="sel" style="left:1739px;top:277px;width:150px;height:45px"></div>
<div class="abs" style="left:301px;top:338.5px;width:4px;height:36.5px;background:#f3f4f6;border-radius:6px 0 0 0"></div>
<span class="t" id="th0" style="left:345.11px;top:355.02px;font-size:9.9px;font-weight:400;color:#1c2140;letter-spacing:-0.711px;-webkit-text-stroke:0.2px #1c2140;">NAZWA</span>
<span class="t" id="th1" style="left:963.47px;top:355.02px;font-size:9.9px;font-weight:400;color:#1c2140;letter-spacing:-0.854px;-webkit-text-stroke:0.2px #1c2140;">KOD</span>
<span class="t" id="th2" style="left:1061.65px;top:355.02px;font-size:9.9px;font-weight:400;color:#1c2140;letter-spacing:-0.512px;-webkit-text-stroke:0.2px #1c2140;">PKWIU</span>
<span class="t" id="th3" style="left:1210.92px;top:355.02px;font-size:9.9px;font-weight:400;color:#1c2140;letter-spacing:-0.844px;-webkit-text-stroke:0.2px #1c2140;">JEDN.</span>
<span class="t" id="th4" style="left:1331.45px;top:355.02px;font-size:9.9px;font-weight:400;color:#1c2140;letter-spacing:-0.660px;-webkit-text-stroke:0.2px #1c2140;">VAT</span>
<span class="t" id="th5" style="left:1429.20px;top:355.02px;font-size:9.9px;font-weight:400;color:#1c2140;letter-spacing:-0.968px;-webkit-text-stroke:0.2px #1c2140;">CENA</span>
<span class="t" id="th6" style="left:1561.70px;top:355.02px;font-size:9.9px;font-weight:400;color:#1c2140;letter-spacing:-0.681px;-webkit-text-stroke:0.2px #1c2140;">ILOŚĆ</span>
<span class="t" id="th7" style="left:1673.69px;top:355.02px;font-size:9.9px;font-weight:400;color:#1c2140;letter-spacing:-0.846px;-webkit-text-stroke:0.2px #1c2140;">GRUPA</span>
<span class="t" id="th8" style="left:1814.70px;top:355.02px;font-size:9.9px;font-weight:400;color:#1c2140;letter-spacing:-1.500px;-webkit-text-stroke:0.2px #1c2140;">AKCJE</span>
<div class="cb" style="left:313px;top:350px"></div>
<div class="abs" style="left:305px;top:374px;width:1584px;height:2px;background:#e3e6ee"></div>
<div class="hl" style="top:420px"></div>
<div class="cb" style="left:313px;top:388px"></div>
<span class="t" id="r0c3" style="left:1210.65px;top:387.00px;font-size:13px;font-weight:400;color:#3b4058;letter-spacing:0.243px;">szt</span>
<span class="t" id="r0c4" style="left:1330.41px;top:387.00px;font-size:13px;font-weight:400;color:#3b4058;letter-spacing:1.158px;">23</span>
<span class="t" id="r0c5" style="left:1428.96px;top:387.00px;font-size:13px;font-weight:400;color:#3b4058;letter-spacing:0.000px;">0</span>
<span class="t" id="r0c6" style="left:1561.96px;top:387.00px;font-size:13px;font-weight:400;color:#3b4058;letter-spacing:0.000px;">0</span>
<span class="t" id="r0c7" style="left:1673.39px;top:387.00px;font-size:13px;font-weight:400;color:#3b4058;letter-spacing:0.000px;">G</span>
<div class="ab" style="left:1818px;top:384px;background:#3498db"></div>
<svg class="ic" style="left:1826.17px;top:391.10px;width:10.46px;height:12.20px;" viewBox="0 -1536 1536 1792"><path fill="#fff" transform="scale(1,-1)" d="M363 0l91 91l-235 235l-91 -91v-107h128v-128h107zM886 928q0 22 -22 22q-10 0 -17 -7l-542 -542q-7 -7 -7 -17q0 -22 22 -22q10 0 17 7l542 542q7 7 7 17zM832 1120l416 -416l-832 -832h-416v416zM1515 1024q0 -53 -37 -90l-166 -166l-416 416l166 165q36 38 90 38 q53 0 91 -38l235 -234q37 -39 37 -91z"/></svg>
<div class="ab" style="left:1850px;top:384px;background:#e74c3c"></div>
<svg class="ic" style="left:1858.85px;top:390.70px;width:9.90px;height:12.60px;" viewBox="0 -1536 1408 1792"><path fill="#fff" transform="scale(1,-1)" d="M512 160v704q0 14 -9 23t-23 9h-64q-14 0 -23 -9t-9 -23v-704q0 -14 9 -23t23 -9h64q14 0 23 9t9 23zM768 160v704q0 14 -9 23t-23 9h-64q-14 0 -23 -9t-9 -23v-704q0 -14 9 -23t23 -9h64q14 0 23 9t9 23zM1024 160v704q0 14 -9 23t-23 9h-64q-14 0 -23 -9t-9 -23v-704 q0 -14 9 -23t23 -9h64q14 0 23 9t9 23zM480 1152h448l-48 117q-7 9 -17 11h-317q-10 -2 -17 -11zM1408 1120v-64q0 -14 -9 -23t-23 -9h-96v-948q0 -83 -47 -143.5t-113 -60.5h-832q-66 0 -113 58.5t-47 141.5v952h-96q-14 0 -23 9t-9 23v64q0 14 9 23t23 9h309l70 167 q15 37 54 63t79 26h320q40 0 79 -26t54 -63l70 -167h309q14 0 23 -9t9 -23z"/></svg>
<div class="row" style="top:421px;background:#f5f5f5"></div>
<div class="hl" style="top:465px"></div>
<div class="cb" style="left:313px;top:433px"></div>
<span class="t" id="r1c0" style="left:345.34px;top:432.00px;font-size:13px;font-weight:400;color:#3b4058;letter-spacing:0.077px;">Abonament za miesiąc $MIESIAC</span>
<span class="t" id="r1c1" style="left:963.08px;top:432.00px;font-size:13px;font-weight:400;color:#3b4058;letter-spacing:0.049px;">U1</span>
<span class="t" id="r1c3" style="left:1210.63px;top:432.00px;font-size:13px;font-weight:400;color:#3b4058;letter-spacing:0.253px;">szt</span>
<span class="t" id="r1c4" style="left:1330.38px;top:432.00px;font-size:13px;font-weight:400;color:#3b4058;letter-spacing:1.188px;">23</span>
<span class="t" id="r1c5" style="left:1429.49px;top:432.00px;font-size:13px;font-weight:400;color:#3b4058;letter-spacing:-0.163px;">45</span>
<span class="t" id="r1c6" style="left:1561.97px;top:432.00px;font-size:13px;font-weight:400;color:#3b4058;letter-spacing:0.000px;">0</span>
<span class="t" id="r1c7" style="left:1673.43px;top:432.00px;font-size:13px;font-weight:400;color:#3b4058;letter-spacing:0.000px;">G</span>
<div class="ab" style="left:1818px;top:429px;background:#3498db"></div>
<svg class="ic" style="left:1826.17px;top:436.10px;width:10.46px;height:12.20px;" viewBox="0 -1536 1536 1792"><path fill="#fff" transform="scale(1,-1)" d="M363 0l91 91l-235 235l-91 -91v-107h128v-128h107zM886 928q0 22 -22 22q-10 0 -17 -7l-542 -542q-7 -7 -7 -17q0 -22 22 -22q10 0 17 7l542 542q7 7 7 17zM832 1120l416 -416l-832 -832h-416v416zM1515 1024q0 -53 -37 -90l-166 -166l-416 416l166 165q36 38 90 38 q53 0 91 -38l235 -234q37 -39 37 -91z"/></svg>
<div class="ab" style="left:1850px;top:429px;background:#e74c3c"></div>
<svg class="ic" style="left:1858.85px;top:435.70px;width:9.90px;height:12.60px;" viewBox="0 -1536 1408 1792"><path fill="#fff" transform="scale(1,-1)" d="M512 160v704q0 14 -9 23t-23 9h-64q-14 0 -23 -9t-9 -23v-704q0 -14 9 -23t23 -9h64q14 0 23 9t9 23zM768 160v704q0 14 -9 23t-23 9h-64q-14 0 -23 -9t-9 -23v-704q0 -14 9 -23t23 -9h64q14 0 23 9t9 23zM1024 160v704q0 14 -9 23t-23 9h-64q-14 0 -23 -9t-9 -23v-704 q0 -14 9 -23t23 -9h64q14 0 23 9t9 23zM480 1152h448l-48 117q-7 9 -17 11h-317q-10 -2 -17 -11zM1408 1120v-64q0 -14 -9 -23t-23 -9h-96v-948q0 -83 -47 -143.5t-113 -60.5h-832q-66 0 -113 58.5t-47 141.5v952h-96q-14 0 -23 9t-9 23v64q0 14 9 23t23 9h309l70 167 q15 37 54 63t79 26h320q40 0 79 -26t54 -63l70 -167h309q14 0 23 -9t9 -23z"/></svg>
<div class="hl" style="top:510px"></div>
<div class="cb" style="left:313px;top:478px"></div>
<span class="t" id="r2c0" style="left:345.60px;top:477.00px;font-size:13px;font-weight:400;color:#3b4058;letter-spacing:0.009px;">Abonament za miesiąc $MIESIAC-1</span>
<span class="t" id="r2c1" style="left:963.05px;top:477.00px;font-size:13px;font-weight:400;color:#3b4058;letter-spacing:1.039px;">U2</span>
<span class="t" id="r2c3" style="left:1210.65px;top:477.00px;font-size:13px;font-weight:400;color:#3b4058;letter-spacing:0.243px;">szt</span>
<span class="t" id="r2c4" style="left:1330.41px;top:477.00px;font-size:13px;font-weight:400;color:#3b4058;letter-spacing:1.158px;">23</span>
<span class="t" id="r2c5" style="left:1428.86px;top:477.00px;font-size:13px;font-weight:400;color:#3b4058;letter-spacing:0.747px;">10</span>
<span class="t" id="r2c6" style="left:1561.86px;top:477.00px;font-size:13px;font-weight:400;color:#3b4058;letter-spacing:0.000px;">1</span>
<span class="t" id="r2c7" style="left:1673.39px;top:477.00px;font-size:13px;font-weight:400;color:#3b4058;letter-spacing:0.000px;">G</span>
<div class="ab" style="left:1818px;top:474px;background:#3498db"></div>
<svg class="ic" style="left:1826.17px;top:481.10px;width:10.46px;height:12.20px;" viewBox="0 -1536 1536 1792"><path fill="#fff" transform="scale(1,-1)" d="M363 0l91 91l-235 235l-91 -91v-107h128v-128h107zM886 928q0 22 -22 22q-10 0 -17 -7l-542 -542q-7 -7 -7 -17q0 -22 22 -22q10 0 17 7l542 542q7 7 7 17zM832 1120l416 -416l-832 -832h-416v416zM1515 1024q0 -53 -37 -90l-166 -166l-416 416l166 165q36 38 90 38 q53 0 91 -38l235 -234q37 -39 37 -91z"/></svg>
<div class="ab" style="left:1850px;top:474px;background:#e74c3c"></div>
<svg class="ic" style="left:1858.85px;top:480.70px;width:9.90px;height:12.60px;" viewBox="0 -1536 1408 1792"><path fill="#fff" transform="scale(1,-1)" d="M512 160v704q0 14 -9 23t-23 9h-64q-14 0 -23 -9t-9 -23v-704q0 -14 9 -23t23 -9h64q14 0 23 9t9 23zM768 160v704q0 14 -9 23t-23 9h-64q-14 0 -23 -9t-9 -23v-704q0 -14 9 -23t23 -9h64q14 0 23 9t9 23zM1024 160v704q0 14 -9 23t-23 9h-64q-14 0 -23 -9t-9 -23v-704 q0 -14 9 -23t23 -9h64q14 0 23 9t9 23zM480 1152h448l-48 117q-7 9 -17 11h-317q-10 -2 -17 -11zM1408 1120v-64q0 -14 -9 -23t-23 -9h-96v-948q0 -83 -47 -143.5t-113 -60.5h-832q-66 0 -113 58.5t-47 141.5v952h-96q-14 0 -23 9t-9 23v64q0 14 9 23t23 9h309l70 167 q15 37 54 63t79 26h320q40 0 79 -26t54 -63l70 -167h309q14 0 23 -9t9 -23z"/></svg>
<div class="row" style="top:511px;background:#f5f5f5"></div>
<div class="hl" style="top:555px"></div>
<div class="cb" style="left:313px;top:523px"></div>
<span class="t" id="r3c0" style="left:345.30px;top:522.00px;font-size:13px;font-weight:400;color:#3b4058;letter-spacing:0.103px;">asdfsafa</span>
<span class="t" id="r3c5" style="left:1428.73px;top:522.00px;font-size:13px;font-weight:400;color:#3b4058;letter-spacing:0.478px;">343</span>
<span class="t" id="r3c6" style="left:1562.05px;top:522.00px;font-size:13px;font-weight:400;color:#3b4058;letter-spacing:0.000px;">-</span>
<span class="t" id="r3c7" style="left:1673.43px;top:522.00px;font-size:13px;font-weight:400;color:#3b4058;letter-spacing:0.000px;">G</span>
<div class="ab" style="left:1818px;top:519px;background:#3498db"></div>
<svg class="ic" style="left:1826.17px;top:526.10px;width:10.46px;height:12.20px;" viewBox="0 -1536 1536 1792"><path fill="#fff" transform="scale(1,-1)" d="M363 0l91 91l-235 235l-91 -91v-107h128v-128h107zM886 928q0 22 -22 22q-10 0 -17 -7l-542 -542q-7 -7 -7 -17q0 -22 22 -22q10 0 17 7l542 542q7 7 7 17zM832 1120l416 -416l-832 -832h-416v416zM1515 1024q0 -53 -37 -90l-166 -166l-416 416l166 165q36 38 90 38 q53 0 91 -38l235 -234q37 -39 37 -91z"/></svg>
<div class="ab" style="left:1850px;top:519px;background:#e74c3c"></div>
<svg class="ic" style="left:1858.85px;top:525.70px;width:9.90px;height:12.60px;" viewBox="0 -1536 1408 1792"><path fill="#fff" transform="scale(1,-1)" d="M512 160v704q0 14 -9 23t-23 9h-64q-14 0 -23 -9t-9 -23v-704q0 -14 9 -23t23 -9h64q14 0 23 9t9 23zM768 160v704q0 14 -9 23t-23 9h-64q-14 0 -23 -9t-9 -23v-704q0 -14 9 -23t23 -9h64q14 0 23 9t9 23zM1024 160v704q0 14 -9 23t-23 9h-64q-14 0 -23 -9t-9 -23v-704 q0 -14 9 -23t23 -9h64q14 0 23 9t9 23zM480 1152h448l-48 117q-7 9 -17 11h-317q-10 -2 -17 -11zM1408 1120v-64q0 -14 -9 -23t-23 -9h-96v-948q0 -83 -47 -143.5t-113 -60.5h-832q-66 0 -113 58.5t-47 141.5v952h-96q-14 0 -23 9t-9 23v64q0 14 9 23t23 9h309l70 167 q15 37 54 63t79 26h320q40 0 79 -26t54 -63l70 -167h309q14 0 23 -9t9 -23z"/></svg>
<div class="hl" style="top:600px"></div>
<div class="cb" style="left:313px;top:568px"></div>
<span class="t" id="r4c0" style="left:345.11px;top:567.00px;font-size:13px;font-weight:400;color:#3b4058;letter-spacing:0.417px;">dfafasdf</span>
<span class="t" id="r4c3" style="left:1210.65px;top:567.00px;font-size:13px;font-weight:400;color:#3b4058;letter-spacing:0.243px;">szt</span>
<span class="t" id="r4c4" style="left:1330.41px;top:567.00px;font-size:13px;font-weight:400;color:#3b4058;letter-spacing:1.158px;">23</span>
<span class="t" id="r4c5" style="left:1428.86px;top:567.00px;font-size:13px;font-weight:400;color:#3b4058;letter-spacing:1.053px;">111</span>
<span class="t" id="r4c6" style="left:1561.96px;top:567.00px;font-size:13px;font-weight:400;color:#3b4058;letter-spacing:0.000px;">0</span>
<span class="t" id="r4c7" style="left:1673.39px;top:567.00px;font-size:13px;font-weight:400;color:#3b4058;letter-spacing:0.000px;">G</span>
<div class="ab" style="left:1818px;top:564px;background:#3498db"></div>
<svg class="ic" style="left:1826.17px;top:571.10px;width:10.46px;height:12.20px;" viewBox="0 -1536 1536 1792"><path fill="#fff" transform="scale(1,-1)" d="M363 0l91 91l-235 235l-91 -91v-107h128v-128h107zM886 928q0 22 -22 22q-10 0 -17 -7l-542 -542q-7 -7 -7 -17q0 -22 22 -22q10 0 17 7l542 542q7 7 7 17zM832 1120l416 -416l-832 -832h-416v416zM1515 1024q0 -53 -37 -90l-166 -166l-416 416l166 165q36 38 90 38 q53 0 91 -38l235 -234q37 -39 37 -91z"/></svg>
<div class="ab" style="left:1850px;top:564px;background:#e74c3c"></div>
<svg class="ic" style="left:1858.85px;top:570.70px;width:9.90px;height:12.60px;" viewBox="0 -1536 1408 1792"><path fill="#fff" transform="scale(1,-1)" d="M512 160v704q0 14 -9 23t-23 9h-64q-14 0 -23 -9t-9 -23v-704q0 -14 9 -23t23 -9h64q14 0 23 9t9 23zM768 160v704q0 14 -9 23t-23 9h-64q-14 0 -23 -9t-9 -23v-704q0 -14 9 -23t23 -9h64q14 0 23 9t9 23zM1024 160v704q0 14 -9 23t-23 9h-64q-14 0 -23 -9t-9 -23v-704 q0 -14 9 -23t23 -9h64q14 0 23 9t9 23zM480 1152h448l-48 117q-7 9 -17 11h-317q-10 -2 -17 -11zM1408 1120v-64q0 -14 -9 -23t-23 -9h-96v-948q0 -83 -47 -143.5t-113 -60.5h-832q-66 0 -113 58.5t-47 141.5v952h-96q-14 0 -23 9t-9 23v64q0 14 9 23t23 9h309l70 167 q15 37 54 63t79 26h320q40 0 79 -26t54 -63l70 -167h309q14 0 23 -9t9 -23z"/></svg>
<div class="row" style="top:601px;background:#f5f5f5"></div>
<div class="hl" style="top:645px"></div>
<div class="cb" style="left:313px;top:613px"></div>
<span class="t" id="r5c0" style="left:344.55px;top:612.00px;font-size:13px;font-weight:400;color:#3b4058;letter-spacing:0.351px;">Komputer PC</span>
<span class="t" id="r5c1" style="left:963.90px;top:612.00px;font-size:13px;font-weight:400;color:#3b4058;letter-spacing:-0.702px;">T1</span>
<span class="t" id="r5c3" style="left:1210.63px;top:612.00px;font-size:13px;font-weight:400;color:#3b4058;letter-spacing:0.253px;">szt</span>
<span class="t" id="r5c4" style="left:1330.38px;top:612.00px;font-size:13px;font-weight:400;color:#3b4058;letter-spacing:1.188px;">23</span>
<span class="t" id="r5c5" style="left:1428.86px;top:612.00px;font-size:13px;font-weight:400;color:#3b4058;letter-spacing:0.289px;">10000</span>
<span class="t" id="r5c6" style="left:1562.05px;top:612.00px;font-size:13px;font-weight:400;color:#3b4058;letter-spacing:0.000px;">-</span>
<span class="t" id="r5c7" style="left:1673.43px;top:612.00px;font-size:13px;font-weight:400;color:#3b4058;letter-spacing:0.000px;">G</span>
<div class="ab" style="left:1818px;top:609px;background:#3498db"></div>
<svg class="ic" style="left:1826.17px;top:616.10px;width:10.46px;height:12.20px;" viewBox="0 -1536 1536 1792"><path fill="#fff" transform="scale(1,-1)" d="M363 0l91 91l-235 235l-91 -91v-107h128v-128h107zM886 928q0 22 -22 22q-10 0 -17 -7l-542 -542q-7 -7 -7 -17q0 -22 22 -22q10 0 17 7l542 542q7 7 7 17zM832 1120l416 -416l-832 -832h-416v416zM1515 1024q0 -53 -37 -90l-166 -166l-416 416l166 165q36 38 90 38 q53 0 91 -38l235 -234q37 -39 37 -91z"/></svg>
<div class="ab" style="left:1850px;top:609px;background:#e74c3c"></div>
<svg class="ic" style="left:1858.85px;top:615.70px;width:9.90px;height:12.60px;" viewBox="0 -1536 1408 1792"><path fill="#fff" transform="scale(1,-1)" d="M512 160v704q0 14 -9 23t-23 9h-64q-14 0 -23 -9t-9 -23v-704q0 -14 9 -23t23 -9h64q14 0 23 9t9 23zM768 160v704q0 14 -9 23t-23 9h-64q-14 0 -23 -9t-9 -23v-704q0 -14 9 -23t23 -9h64q14 0 23 9t9 23zM1024 160v704q0 14 -9 23t-23 9h-64q-14 0 -23 -9t-9 -23v-704 q0 -14 9 -23t23 -9h64q14 0 23 9t9 23zM480 1152h448l-48 117q-7 9 -17 11h-317q-10 -2 -17 -11zM1408 1120v-64q0 -14 -9 -23t-23 -9h-96v-948q0 -83 -47 -143.5t-113 -60.5h-832q-66 0 -113 58.5t-47 141.5v952h-96q-14 0 -23 9t-9 23v64q0 14 9 23t23 9h309l70 167 q15 37 54 63t79 26h320q40 0 79 -26t54 -63l70 -167h309q14 0 23 -9t9 -23z"/></svg>
<div class="row" style="left:305px;width:1584px;top:646px;background:#ecf6fe"></div>
<div class="hl" style="top:690px"></div>
<div class="cb" style="left:313px;top:658px"></div>
<span class="t" id="r6c0" style="left:344.44px;top:657.00px;font-size:13px;font-weight:400;color:#3b4058;letter-spacing:0.872px;">Monitor</span>
<span class="t" id="r6c1" style="left:963.71px;top:657.00px;font-size:13px;font-weight:400;color:#3b4058;letter-spacing:0.668px;">T2</span>
<span class="t" id="r6c3" style="left:1210.60px;top:657.00px;font-size:13px;font-weight:400;color:#3b4058;letter-spacing:0.228px;">szt</span>
<span class="t" id="r6c4" style="left:1330.93px;top:657.00px;font-size:13px;font-weight:400;color:#3b4058;letter-spacing:0.000px;">7</span>
<span class="t" id="r6c5" style="left:1428.92px;top:657.00px;font-size:13px;font-weight:400;color:#3b4058;letter-spacing:0.366px;">1000</span>
<span class="t" id="r6c6" style="left:1562.05px;top:657.00px;font-size:13px;font-weight:400;color:#3b4058;letter-spacing:0.000px;">0</span>
<span class="t" id="r6c7" style="left:1673.41px;top:657.00px;font-size:13px;font-weight:400;color:#3b4058;letter-spacing:0.000px;">G</span>
<div class="ab" style="left:1818px;top:654px;background:#3498db"></div>
<svg class="ic" style="left:1826.17px;top:661.10px;width:10.46px;height:12.20px;" viewBox="0 -1536 1536 1792"><path fill="#fff" transform="scale(1,-1)" d="M363 0l91 91l-235 235l-91 -91v-107h128v-128h107zM886 928q0 22 -22 22q-10 0 -17 -7l-542 -542q-7 -7 -7 -17q0 -22 22 -22q10 0 17 7l542 542q7 7 7 17zM832 1120l416 -416l-832 -832h-416v416zM1515 1024q0 -53 -37 -90l-166 -166l-416 416l166 165q36 38 90 38 q53 0 91 -38l235 -234q37 -39 37 -91z"/></svg>
<div class="ab" style="left:1850px;top:654px;background:#e74c3c"></div>
<svg class="ic" style="left:1858.85px;top:660.70px;width:9.90px;height:12.60px;" viewBox="0 -1536 1408 1792"><path fill="#fff" transform="scale(1,-1)" d="M512 160v704q0 14 -9 23t-23 9h-64q-14 0 -23 -9t-9 -23v-704q0 -14 9 -23t23 -9h64q14 0 23 9t9 23zM768 160v704q0 14 -9 23t-23 9h-64q-14 0 -23 -9t-9 -23v-704q0 -14 9 -23t23 -9h64q14 0 23 9t9 23zM1024 160v704q0 14 -9 23t-23 9h-64q-14 0 -23 -9t-9 -23v-704 q0 -14 9 -23t23 -9h64q14 0 23 9t9 23zM480 1152h448l-48 117q-7 9 -17 11h-317q-10 -2 -17 -11zM1408 1120v-64q0 -14 -9 -23t-23 -9h-96v-948q0 -83 -47 -143.5t-113 -60.5h-832q-66 0 -113 58.5t-47 141.5v952h-96q-14 0 -23 9t-9 23v64q0 14 9 23t23 9h309l70 167 q15 37 54 63t79 26h320q40 0 79 -26t54 -63l70 -167h309q14 0 23 -9t9 -23z"/></svg>
<div class="cb" style="left:311px;top:703px"></div>
<span class="t" id="tf0" style="left:345.01px;top:702.30px;font-size:13px;font-weight:700;color:#7b7b84;letter-spacing:0.717px;">Nazwa</span>
<span class="t" id="tf1" style="left:963.18px;top:702.30px;font-size:13px;font-weight:700;color:#7b7b84;letter-spacing:0.220px;">Kod</span>
<span class="t" id="tf2" style="left:1061.33px;top:702.30px;font-size:13px;font-weight:700;color:#7b7b84;letter-spacing:0.062px;">PKWiU</span>
<span class="t" id="tf3" style="left:1210.77px;top:702.30px;font-size:13px;font-weight:700;color:#7b7b84;letter-spacing:-0.172px;">Jedn.</span>
<span class="t" id="tf4" style="left:1331.36px;top:702.30px;font-size:13px;font-weight:700;color:#7b7b84;letter-spacing:0.237px;">VAT</span>
<span class="t" id="tf5" style="left:1429.34px;top:702.30px;font-size:13px;font-weight:700;color:#7b7b84;letter-spacing:0.012px;">Cena</span>
<span class="t" id="tf6" style="left:1562.01px;top:702.30px;font-size:13px;font-weight:700;color:#7b7b84;letter-spacing:0.151px;">Ilość</span>
<span class="t" id="tf7" style="left:1673.47px;top:702.30px;font-size:13px;font-weight:700;color:#7b7b84;letter-spacing:0.214px;">Grupa</span>
<span class="t" id="tf8" style="left:1813.97px;top:702.30px;font-size:13px;font-weight:700;color:#7b7b84;letter-spacing:0.341px;">Akcje</span>
<span class="t" id="info" style="left:301.29px;top:744.70px;font-size:13px;font-weight:400;color:#5f7399;letter-spacing:-0.074px;">1 - 7 z 7</span>
<div class="abs" style="left:1624px;top:749px;width:114.5px;height:35.5px;border:1px solid #f0f1f3;border-radius:5px;background:#fff"></div>
<span class="t" id="prevA" style="left:1635.40px;top:760.27px;font-size:13.5px;font-weight:400;color:#c6c9d1;letter-spacing:0.000px;transform:scaleX(1.4);transform-origin:0 50%;">←</span>
<span class="t" id="prev" style="left:1654.59px;top:761.17px;font-size:13.5px;font-weight:400;color:#c6c9d1;letter-spacing:0.127px;">Poprzednie</span>
<div class="abs" style="left:1743px;top:749px;width:37px;height:35.5px;border-radius:5px;background:#2196f3"></div>
<span class="t" id="p1" style="left:1757.78px;top:761.17px;font-size:13.5px;font-weight:400;color:#fff;letter-spacing:0.000px;">1</span>
<div class="abs" style="left:1784px;top:749px;width:104.5px;height:35.5px;border:1px solid #f0f1f3;border-radius:5px;background:#fff"></div>
<span class="t" id="next" style="left:1799.38px;top:761.17px;font-size:13.5px;font-weight:400;color:#c6c9d1;letter-spacing:0.125px;">Następne</span>
<span class="t" id="nextA" style="left:1857.60px;top:760.27px;font-size:13.5px;font-weight:400;color:#c6c9d1;letter-spacing:0.000px;transform:scaleX(1.4);transform-origin:0 50%;">→</span>
</div></body></html>
